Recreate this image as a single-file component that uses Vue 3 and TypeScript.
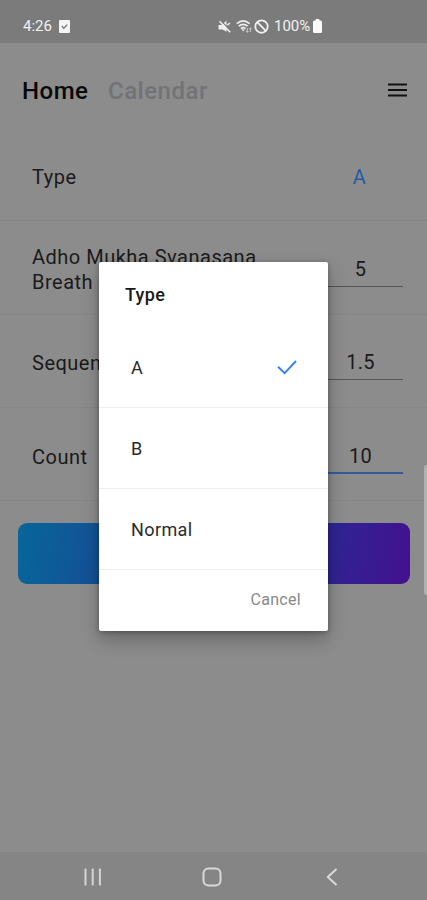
<script setup lang="ts">
import { ref } from 'vue'

interface Field {
  label: string
  value: string
  kind: 'link' | 'input' | 'focused'
}

const fields: Field[] = [
  { label: 'Type', value: 'A', kind: 'link' },
  { label: 'Adho Mukha Svanasana Breath', value: '5', kind: 'input' },
  { label: 'Sequence', value: '1.5', kind: 'input' },
  { label: 'Count', value: '10', kind: 'focused' },
]

const options: string[] = ['A', 'B', 'Normal']
const selected = ref<string>('A')
</script>

<template>
  <div class="screen">
    <header class="status">
      <span class="time">4:26</span>
      <svg class="task" viewBox="0 0 11 13">
        <rect width="11" height="13" rx="1" fill="#f4f4f4" />
        <path d="M2.8 6l2 2.2L8.3 4.6" fill="none" stroke="#777" stroke-width="1.3" />
      </svg>
      <div class="indicators">
        <svg class="mute" viewBox="0 0 13 13">
          <path d="M.5 5h3L8.500 .8v11L4.500 9.500H.5z" fill="#f0f0f0" />
          <path d="M2.700 .7l10 9.800" stroke="#7b7b7b" stroke-width="1.200" />
          <path d="M1.500 1.2l10.7 11M9.5 5.200l2.300-2.200" stroke="#f0f0f0" stroke-width="1.5" fill="none" />
        </svg>
        <svg class="wifi" viewBox="0 0 16 13">
          <path d="M.8 3.7Q7.2-1.8 13.6 3.7M2.8 6.2q4.4-3.7 8.8 0M4.9 8.6q2.3-1.8 4.6 0" fill="none" stroke="#eee" stroke-width="1.7" />
          <path d="M5.5 9.3h3.4l-1.7 2.2z" fill="#eee" />
          <path d="M11.3 8v4.2M10 10.8l1.3 1.6 1.3-1.6M14.4 12V7.8M13.2 9.2l1.2-1.4 1.2 1.4" fill="none" stroke="#ddd" stroke-width=".8" />
        </svg>
        <svg class="block" viewBox="0 0 14 14">
          <circle cx="7" cy="7" r="5.800" fill="none" stroke="#f0f0f0" stroke-width="1.700" />
          <path d="M3 3l8 8" stroke="#f0f0f0" stroke-width="1.700" />
        </svg>
        <span class="percent">100%</span>
        <svg class="battery" viewBox="0 0 9 14">
          <path d="M2.7 0h3.6v1.5h1.2Q9 1.5 9 3v9.5Q9 14 7.5 14h-6Q0 14 0 12.500V3q0-1.500 1.500-1.500h1.200z" fill="#fafafa" />
        </svg>
      </div>
    </header>

    <nav class="tabs">
      <span class="tab active">Home</span>
      <span class="tab">Calendar</span>
      <svg class="menu" viewBox="0 0 19 14">
        <path d="M0 1.500h19M0 7h19M0 12.500h19" stroke="#111" stroke-width="2" />
      </svg>
    </nav>

    <main class="form">
      <div v-for="field in fields" :key="field.label" class="row">
        <span class="label">{{ field.label }}</span>
        <span class="value" :class="field.kind">{{ field.value }}</span>
      </div>
      <button class="start" type="button"></button>
    </main>

    <footer class="navbar">
      <svg class="recent" viewBox="0 0 18 18">
        <path d="M1.500 .5v17M8.700 .5v17M15.900 .5v17" stroke="#d4d4d4" stroke-width="2" />
      </svg>
      <svg class="home" viewBox="0 0 20 20">
        <rect x="1.500" y="1.500" width="17" height="17" rx="5" fill="none" stroke="#dadada" stroke-width="2" />
      </svg>
      <svg class="back" viewBox="0 0 12 18">
        <path d="M10.500 1L1.800 9l8.700 8" fill="none" stroke="#dadada" stroke-width="2" />
      </svg>
    </footer>

    <div class="edge-handle"></div>

    <section class="dialog" role="dialog">
      <h2 class="title">Type</h2>
      <div v-for="option in options" :key="option" class="option" @click="selected = option">
        <span>{{ option }}</span>
        <svg v-if="option === selected" class="check" viewBox="0 0 20 15">
          <path d="M1 6.800l6.600 6.400L19 1" fill="none" stroke="#3484ee" stroke-width="1.900" />
        </svg>
      </div>
      <div class="actions"><span>Cancel</span></div>
    </section>
  </div>
</template>

<style>
body {
  background: #8c8c8c;
}
</style>

<style scoped>
.screen {
  position: relative;
  box-sizing: border-box;
  width: 427px;
  height: 900px;
  overflow: hidden;
  display: flex;
  flex-direction: column;
  background: #8c8c8c;
  color: #1a1a1a;
  font-family: Roboto, sans-serif;
}
svg {
  display: block;
  flex: none;
}
.status {
  box-sizing: border-box;
  height: 43px;
  flex: none;
  display: flex;
  align-items: center;
  padding: 9px 0 0 23px;
  background: #7b7b7b;
  color: #f2f2f2;
  font-size: 15px;
}
.time {
  width: 36px;
  font-size: 15px;
}
.task {
  width: 11px;
  height: 13px;
}
.indicators {
  display: flex;
  align-items: center;
  margin-left: 148px;
}
.mute {
  width: 13px;
  height: 13px;
}
.wifi {
  width: 16px;
  height: 13px;
  margin-left: 5px;
}
.block {
  width: 15px;
  height: 15px;
  margin-left: 2px;
}
.percent {
  width: 38px;
  margin-left: 5px;
}
.battery {
  width: 9px;
  height: 14px;
  margin-left: 1px;
}
.tabs {
  box-sizing: border-box;
  height: 85px;
  flex: none;
  display: flex;
  align-items: center;
  padding: 11px 20px 0 22px;
}
.tab {
  font-size: 24px;
  font-weight: 500;
  letter-spacing: 0.500px;
  color: #727376;
}
.tab.active {
  width: 86px;
  color: #080808;
}
.menu {
  width: 19px;
  height: 14px;
  margin: -3px 0 0 auto;
}
.form {
  flex: 1;
}
.row {
  box-sizing: border-box;
  height: 93.300px;
  display: flex;
  align-items: center;
  justify-content: space-between;
  padding: 4px 24px 0 32px;
  border-bottom: 1px solid #868686;
}
.label {
  width: 240px;
  padding-top: 2px;
  font-size: 20px;
  line-height: 25px;
  letter-spacing: 0.500px;
}
.value {
  box-sizing: border-box;
  width: 85px;
  height: 35px;
  font-size: 20px;
  line-height: 34px;
  letter-spacing: 0.300px;
  text-align: center;
}
.value.link {
  width: 87px;
  line-height: 36px;
  color: #245ba8;
}
.value.input {
  border-bottom: 1px solid #565656;
}
.value.focused {
  border-bottom: 2px solid #345b9a;
}
.start {
  display: block;
  width: 392px;
  height: 61px;
  margin: 22px 0 0 18px;
  padding: 0;
  border: 0;
  border-radius: 9px;
  background: linear-gradient(100deg, #07669a 0%, #154f96 23%, #2c2795 75%, #43118e 100%);
}
.navbar {
  box-sizing: border-box;
  height: 48px;
  flex: none;
  display: flex;
  align-items: center;
  padding: 2px 0 0 84px;
  background: #858585;
}
.recent {
  width: 18px;
  height: 18px;
}
.home {
  width: 20px;
  height: 20px;
  margin-left: 100px;
}
.back {
  width: 12px;
  height: 18px;
  margin-left: 104px;
}
.edge-handle {
  position: absolute;
  right: 0;
  top: 465px;
  width: 3px;
  height: 130px;
  border-radius: 3px 0 0 3px;
  background: #b2b2b2;
}
.dialog {
  position: absolute;
  left: 99px;
  top: 262px;
  box-sizing: border-box;
  width: 229px;
  height: 369px;
  display: flex;
  flex-direction: column;
  border-radius: 2px;
  background: #fff;
  box-shadow: 0 9px 18px rgba(0, 0, 0, 0.25), 0 1px 5px rgba(0, 0, 0, 0.3);
}
.title {
  box-sizing: border-box;
  height: 65px;
  margin: 0;
  padding-left: 26px;
  font-size: 18px;
  font-weight: 500;
  line-height: 65px;
  letter-spacing: 0.300px;
}
.option {
  box-sizing: border-box;
  height: 81px;
  display: flex;
  align-items: center;
  justify-content: space-between;
  padding: 1px 31px 0 32px;
  border-bottom: 1px solid #eee;
  font-size: 18px;
  letter-spacing: 0.400px;
  color: #2a2a2a;
}
.check {
  width: 20px;
  height: 15px;
  margin-top: -1px;
}
.actions {
  flex: 1;
  display: flex;
  align-items: center;
  justify-content: flex-end;
  padding: 0 27px 2px 0;
  font-size: 16px;
  letter-spacing: 0.300px;
  color: #888;
}
</style>
